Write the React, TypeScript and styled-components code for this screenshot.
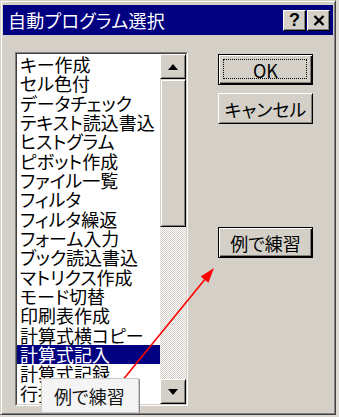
import styled, { createGlobalStyle, css } from 'styled-components';

const Global = createGlobalStyle`
    html, body {
        margin: 0;
        padding: 0;
        background: #dcdad4;
    }
    * {
        box-sizing: border-box;
    }
`;

const FONT = `"Noto Sans CJK JP", "Noto Sans", sans-serif`;

const Window = styled.div`
    position: relative;
    width: 336px;
    height: 415px;
    padding: 4px 2px 2px 2px;
    background: #d4d0c8;
    border: 1px solid;
    border-color: #d4d0c8 #404040 #404040 #d4d0c8;
    box-shadow: inset 1px 1px #fff, inset -1px -1px #808080;
    display: flex;
    flex-direction: column;
    font-family: ${FONT};
    font-feature-settings: "palt";
    overflow: hidden;
`;

const TitleBar = styled.div`
    height: 30px;
    background: #000080;
    color: #fff;
    display: flex;
    align-items: center;
    padding-left: 5px;
`;

const Title = styled.span`
    flex: 1;
    font-size: 18px;
    line-height: 1;
    letter-spacing: 0.3px;
`;

const TitleButtons = styled.div`
    display: flex;
    gap: 1px;
    margin-right: 3px;
`;

const raised = css`
    background: #d4d0c8;
    border: 1px solid;
    border-color: #fff #000 #000 #fff;
    box-shadow: inset -1px -1px #808080;
`;

const CaptionButton = styled.div`
    ${raised};
    flex: 0 0 23px;
    width: 23px;
    height: 21px;
    display: flex;
    align-items: center;
    justify-content: center;
    color: #000;
    font-family: "Liberation Sans", sans-serif;
    font-weight: bold;
    font-size: 18px;
`;

const Body = styled.div`
    flex: 1;
    display: flex;
    padding: 17px 0 0 12px;
    gap: 30px;
`;

const ListBox = styled.div`
    width: 173px;
    height: 354px;
    border: 1px solid;
    border-color: #808080 #fff #fff #808080;
    display: flex;
`;

const ListInner = styled.div`
    flex: 1;
    display: flex;
    border: 1px solid;
    border-color: #404040 #d4d0c8 #d4d0c8 #404040;
    background: #fff;
`;

const Items = styled.div`
    flex: 1;
    padding-top: 1px;
    overflow: hidden;
`;

const Item = styled.div<{ $selected?: boolean }>`
    height: 19.33px;
    line-height: 19.33px;
    padding-left: 3px;
    font-size: 18px;
    white-space: nowrap;
    color: ${p => (p.$selected ? '#fff' : '#000')};
    background: ${p => (p.$selected ? '#000080' : 'transparent')};
`;

const ScrollBar = styled.div`
    width: 26px;
    display: flex;
    flex-direction: column;
`;

const ArrowButton = styled.div`
    ${raised};
    height: 25px;
    display: flex;
    align-items: center;
    justify-content: center;
    box-shadow: inset 1px 1px #d4d0c8, inset -1px -1px #808080;
`;

const Track = styled.div`
    flex: 1;
    display: flex;
    flex-direction: column;
    background: repeating-conic-gradient(#d4d0c8 0 25%, #ffffff 0 50%) 0 0 / 2px 2px;
`;

const Thumb = styled.div`
    ${raised};
    height: 148px;
    border-color: #d4d0c8 #000 #000 #d4d0c8;
    box-shadow: inset 1px 1px #fff, inset -1px -1px #808080;
`;

const ButtonColumn = styled.div`
    display: flex;
    flex-direction: column;
    padding-top: 2px;
`;

const Button = styled.div<{ $default?: boolean; $gap?: number }>`
    position: relative;
    width: 95px;
    height: 31px;
    margin-top: ${p => p.$gap ?? 0}px;
    background: #d4d0c8;
    display: flex;
    align-items: center;
    justify-content: center;
    font-size: 18px;
    color: #000;
    border: 1px solid;
    ${p =>
        p.$default
            ? css`
                  border-color: #000;
                  box-shadow: inset 1px 1px #fff, inset -1px -1px #000, inset -2px -2px #808080;
              `
            : css`
                  border-color: #fff #000 #000 #fff;
                  box-shadow: inset 1px 1px #d4d0c8, inset -1px -1px #808080;
              `}
`;

const FocusRing = styled.span`
    position: absolute;
    inset: 4px 5px 5px 4px;
    border: 1px dotted #000;
`;

const Overlay = styled.svg`
    position: absolute;
    left: 0;
    top: 0;
    pointer-events: none;
`;

const Tooltip = styled.div`
    position: absolute;
    left: 40px;
    top: 377px;
    width: 98px;
    height: 35px;
    background: #f4f4f4;
    border: 1px solid #c8c8c8;
    box-shadow: 1px 1px #8c8c8c;
    display: flex;
    align-items: center;
    padding-left: 12px;
    font-size: 18px;
    color: #111;
`;

const items = [
    'キー作成',
    'セル色付',
    'データチェック',
    'テキスト読込書込',
    'ヒストグラム',
    'ピボット作成',
    'ファイル一覧',
    'フィルタ',
    'フィルタ繰返',
    'フォーム入力',
    'ブック読込書込',
    'マトリクス作成',
    'モード切替',
    '印刷表作成',
    '計算式横コピー',
    '計算式記入',
    '計算式記録',
    '行挿入',
];

const App = () => {
    return (
        <>
            <Global />
            <Window>
                <TitleBar>
                    <Title>自動プログラム選択</Title>
                    <TitleButtons>
                        <CaptionButton>?</CaptionButton>
                        <CaptionButton>
                            <svg width="12" height="11" viewBox="0 0 12 11">
                                <path d="M1.5 1 L10.5 10 M10.5 1 L1.5 10" stroke="#000" strokeWidth="2.4" />
                            </svg>
                        </CaptionButton>
                    </TitleButtons>
                </TitleBar>
                <Body>
                    <ListBox>
                        <ListInner>
                            <Items>
                                {items.map(name => (
                                    <Item key={name} $selected={name === '計算式記入'}>
                                        {name}
                                    </Item>
                                ))}
                            </Items>
                            <ScrollBar>
                                <ArrowButton>
                                    <svg width="10" height="6" viewBox="0 0 10 6">
                                        <polygon points="5,0 10,6 0,6" fill="#000" />
                                    </svg>
                                </ArrowButton>
                                <Track>
                                    <Thumb />
                                </Track>
                                <ArrowButton>
                                    <svg width="10" height="6" viewBox="0 0 10 6">
                                        <polygon points="0,0 10,0 5,6" fill="#000" />
                                    </svg>
                                </ArrowButton>
                            </ScrollBar>
                        </ListInner>
                    </ListBox>
                    <ButtonColumn>
                        <Button $default>
                            OK
                            <FocusRing />
                        </Button>
                        <Button $gap={8}>キャンセル</Button>
                        <Button $default $gap={103}>
                            例で練習
                        </Button>
                    </ButtonColumn>
                </Body>
                <Overlay width="336" height="417" viewBox="0 0 336 417">
                    <line x1="90" y1="418" x2="205" y2="277" stroke="#ff0000" strokeWidth="1.6" />
                    <polygon points="213,267 207.4,281.8 199.7,275.5" fill="#ff0000" />
                </Overlay>
                <Tooltip>例で練習</Tooltip>
            </Window>
        </>
    );
};

export default App;
